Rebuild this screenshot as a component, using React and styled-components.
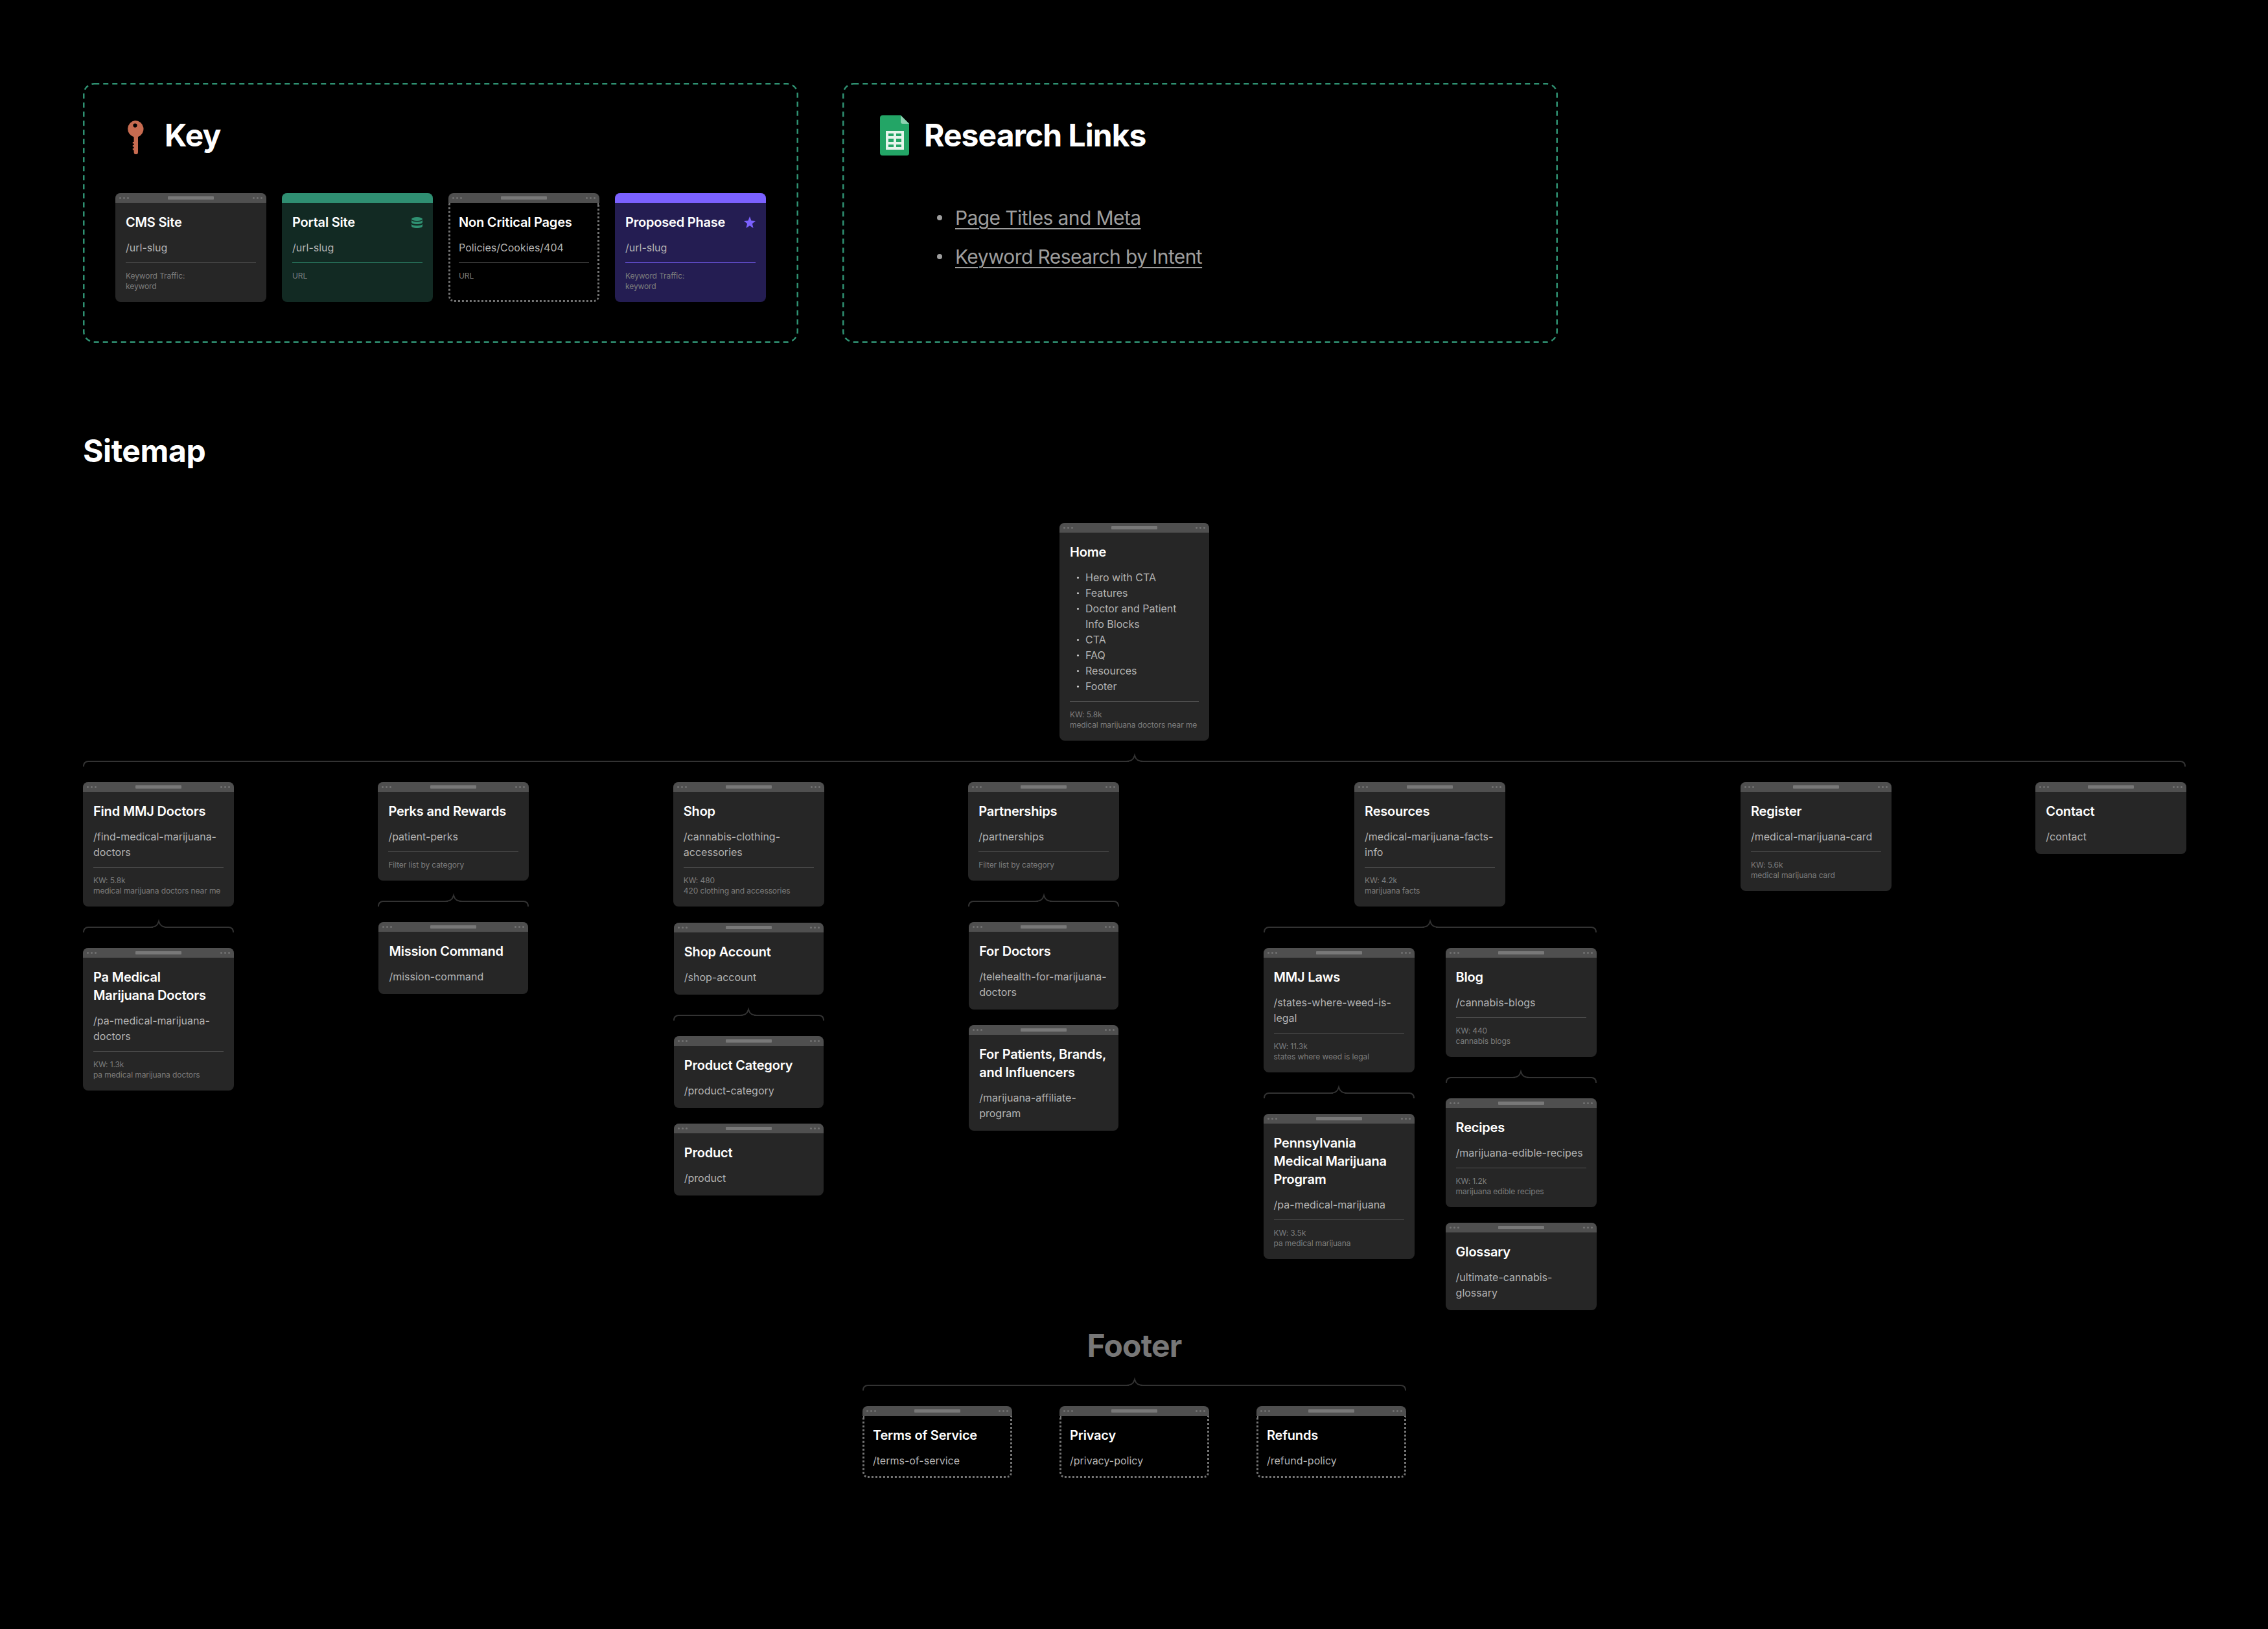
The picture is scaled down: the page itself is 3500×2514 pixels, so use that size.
import React from 'react';
import styled, { createGlobalStyle, css } from 'styled-components';

const GlobalStyle = createGlobalStyle`
  html, body {
    margin: 0;
    background: #000;
  }
  * {
    box-sizing: border-box;
  }
`;

const Page = styled.div`
  width: 3500px;
  min-height: 2514px;
  padding: 128px 0 0 128px;
  background: #000;
  color: #fff;
  font-family: Inter, 'Liberation Sans', sans-serif;
`;

const TopRow = styled.div`
  display: flex;
  gap: 68px;
`;

const KeyBox = styled.section`
  position: relative;
  width: 1104px;
  height: 401px;
  padding: 48px;
`;

const DashFrame = styled.svg`
  position: absolute;
  inset: 0;
  width: 100%;
  height: 100%;
  fill: none;
  pointer-events: none;

  rect {
    x: 1.25px;
    y: 1.25px;
    width: calc(100% - 2.5px);
    height: calc(100% - 2.5px);
    rx: 16px;
    stroke: #2f9172;
    stroke-width: 2.5;
    stroke-dasharray: 8 6;
  }
`;

const BoxHead = styled.div`
  display: flex;
  align-items: center;
  gap: 14px;
  height: 64px;
`;

const IconSlot = styled.div`
  display: flex;
  align-items: center;
  justify-content: center;
  width: 64px;
  height: 64px;
  padding-top: ${({ $drop }) => $drop}px;
`;

const Heading = styled.h2`
  margin: 0;
  font-size: 48px;
  line-height: 64px;
  font-weight: 700;
  letter-spacing: -0.96px;
`;

const BoxHeading = styled(Heading)`
  padding-top: 2px;
`;

const KeyCards = styled.div`
  display: flex;
  gap: 24px;
  margin: 58px 0 0 2px;
`;

const Links = styled.ul`
  list-style: none;
  margin: 66px 0 0;
  padding: 0 0 0 98px;
`;

const LinkItem = styled.li`
  display: flex;
  align-items: center;
  gap: 20px;
  height: 60px;
  color: #9e9e9e;
  font-size: 30px;
  letter-spacing: -0.6px;

  &::before {
    content: '';
    width: 8px;
    height: 8px;
    border-radius: 50%;
    background: #9e9e9e;
  }

  a {
    color: inherit;
    text-decoration: underline;
    text-decoration-thickness: 2px;
    text-underline-offset: 5px;
  }
`;

const SitemapTitle = styled(Heading)`
  margin-top: 135px;
  letter-spacing: -0.4px;
`;

const Tree = styled.div`
  width: 3245px;
  margin-top: 79px;
`;

const Centered = styled.div`
  display: flex;
  justify-content: center;
`;

const Bracket = styled.div`
  position: relative;
  align-self: stretch;
  height: 9px;
  margin: 31px 0 24px;
  border: 2px solid #333;
  border-bottom: 0;
  border-radius: 8px 8px 0 0;

  svg {
    position: absolute;
    top: -10px;
    left: 50%;
    width: 26px;
    height: 10px;
    margin-left: -13px;
    overflow: visible;
  }
`;

const Columns = styled.div`
  display: flex;
  align-items: flex-start;
  gap: 222.4px;
`;

const Column = styled.div`
  display: flex;
  flex: none;
  flex-direction: column;
  align-items: ${({ $wide }) => ($wide ? 'center' : 'stretch')};
  width: ${({ $wide }) => ($wide ? '514px' : '233px')};
`;

const Stack = styled.div`
  display: flex;
  flex-direction: column;
  align-items: center;
  gap: ${({ $gap }) => $gap || 24}px;
  width: 100%;
`;

const Pair = styled.div`
  display: flex;
  align-items: flex-start;
  gap: 48px;
  width: 100%;
`;

const FooterTree = styled.div`
  display: flex;
  flex-direction: column;
  width: 839px;
  margin: -3px auto 0;
`;

const FooterTitle = styled.h2`
  margin: 23px 0 0;
  text-align: center;
  font-size: 48px;
  line-height: 64px;
  font-weight: 700;
  letter-spacing: -0.8px;
  color: #777;
`;

const FooterRow = styled.div`
  display: flex;
  justify-content: space-between;
`;

const themes = {
  cms: { bg: '#262626', bar: '#4f4f4f', line: '#525252' },
  portal: { bg: '#122a23', bar: '#2f8f72', line: '#2f8f72' },
  ghost: { bg: '#000', bar: '#4f4f4f', line: '#525252' },
  proposed: { bg: '#241d52', bar: '#7b61ff', line: '#7b61ff' },
};

const CardShell = styled.article`
  display: flex;
  flex-direction: column;
  flex: none;
  width: ${({ $narrow }) => ($narrow ? '231px' : '233px')};
  border-radius: 8px;
  overflow: hidden;
  background: ${({ $kind }) => themes[$kind].bg};
`;

const CardBar = styled.div`
  display: flex;
  align-items: center;
  justify-content: space-between;
  flex: none;
  height: 15px;
  padding: 0 6px;
  background: ${({ $kind }) => themes[$kind].bar};
`;

const Dots = styled.span`
  display: flex;
  gap: 3px;

  i {
    width: 3px;
    height: 3px;
    border-radius: 50%;
    background: #737373;
  }
`;

const BarPill = styled.span`
  width: 71px;
  height: 5px;
  border-radius: 1px;
  background: #787878;
`;

const CardBody = styled.div`
  flex: 1;
  padding: 16px 16px 15px;
  ${({ $kind }) =>
    $kind === 'ghost' &&
    css`
      padding: 16px 13px 12px;
      border: 3px dotted #747474;
      border-top: 0;
      border-radius: 0 0 8px 8px;
    `}
`;

const TitleRow = styled.div`
  display: flex;
  align-items: center;
  justify-content: space-between;
`;

const CardTitle = styled.h3`
  margin: 0;
  font-size: 20px;
  line-height: 28px;
  font-weight: 600;
  letter-spacing: -0.2px;
  color: #fff;
`;

const Slug = styled.div`
  margin-top: 13px;
  font-size: 16px;
  line-height: 24px;
  color: #b3b3b3;
`;

const Bullets = styled.ul`
  list-style: none;
  margin: 13px 0 0;
  padding: 0 16px 0 24px;
  font-size: 16px;
  line-height: 24px;
  color: #b3b3b3;
`;

const Bullet = styled.li`
  position: relative;

  &::before {
    content: '';
    position: absolute;
    top: 11px;
    left: -13px;
    width: 3px;
    height: 3px;
    border-radius: 50%;
    background: #d0d0d0;
  }
`;

const Meta = styled.div`
  margin-top: 11px;
  padding-top: 12px;
  padding-bottom: 1px;
  border-top: 1px solid ${({ $kind }) => themes[$kind].line};
  font-size: 12px;
  line-height: 16px;
  letter-spacing: -0.1px;
  color: #7d7d7d;
`;

const KeyIcon = () => (
  <svg width="27" height="52" viewBox="0 0 27 52">
    <path
      fill="#c76b50"
      fillRule="evenodd"
      d="M13.5 0a13 13 0 0 1 4.500 25.200V49a3.200 3.200 0 0 1-6.400 0v-3.500H9.800v-2.600h1.800v-2.400H9.800v-2.600h1.800v-2.300H9.800V33h1.800v-7.600A13 13 0 0 1 13.500 0zm0 4.500a3.100 3.100 0 1 0 0 6.200 3.100 3.100 0 0 0 0-6.200z"
    />
  </svg>
);

const SheetsIcon = () => (
  <svg width="45" height="62" viewBox="0 0 45 62">
    <path fill="#23a566" d="M4 0h28l13 13v45a4 4 0 0 1-4 4H4a4 4 0 0 1-4-4V4a4 4 0 0 1 4-4z" />
    <path fill="#8ed1b1" d="M32 0l13 13H35a3 3 0 0 1-3-3z" />
    <path
      fill="#e6f4ec"
      fillRule="evenodd"
      d="M9 24h28v29H9zM13 28v4h8v-4zM25 28v4h8v-4zM13 36v5h8v-5zM25 36v5h8v-5zM13 45v4h8v-4zM25 45v4h8v-4z"
    />
  </svg>
);

const DatabaseIcon = () => (
  <svg width="17" height="17" viewBox="0 0 17 17" fill="#2f9172">
    <ellipse cx="8.5" cy="3" rx="8.5" ry="3" />
    <path d="M0 5c1.400 1.500 4.500 2.200 8.500 2.200S15.600 6.500 17 5v3c0 1.600-3.800 3-8.500 3S0 9.600 0 8z" />
    <path d="M0 11c1.400 1.500 4.500 2.200 8.500 2.200s7.100-.7 8.500-2.200v3c0 1.600-3.800 3-8.500 3S0 15.600 0 14z" />
  </svg>
);

const StarIcon = () => (
  <svg width="18" height="18" viewBox="0 0 18 18" fill="#7b61ff">
    <path d="M9 0l2.400 6.500L18 6.900l-5.100 4.300 1.700 6.800L9 14.200 3.400 18l1.700-6.800L0 6.900l6.600-.4z" />
  </svg>
);

const Peak = () => (
  <svg viewBox="0 0 26 10">
    <rect x="4" y="7" width="18" height="3" fill="#000" />
    <path d="M0 9c7 0 11-2 13-9 2 7 6 9 13 9" fill="none" stroke="#333" strokeWidth="2" />
  </svg>
);

const Branch = () => (
  <Bracket>
    <Peak />
  </Bracket>
);

const Card = ({ title, slug, items, meta, kind = 'cms', narrow, icon }) => (
  <CardShell $kind={kind} $narrow={narrow}>
    <CardBar $kind={kind}>
      {(kind === 'cms' || kind === 'ghost') && (
        <>
          <Dots>
            <i />
            <i />
            <i />
          </Dots>
          <BarPill />
          <Dots>
            <i />
            <i />
            <i />
          </Dots>
        </>
      )}
    </CardBar>
    <CardBody $kind={kind}>
      <TitleRow>
        <CardTitle>{title}</CardTitle>
        {icon}
      </TitleRow>
      {slug && <Slug>{slug}</Slug>}
      {items && (
        <Bullets>
          {items.map(item => (
            <Bullet key={item}>{item}</Bullet>
          ))}
        </Bullets>
      )}
      {meta && (
        <Meta $kind={kind}>
          {meta.map(line => (
            <div key={line}>{line}</div>
          ))}
        </Meta>
      )}
    </CardBody>
  </CardShell>
);

const homeItems = [
  'Hero with CTA',
  'Features',
  'Doctor and Patient Info Blocks',
  'CTA',
  'FAQ',
  'Resources',
  'Footer',
];

export default function App() {
  return (
    <Page>
      <GlobalStyle />
      <TopRow>
        <KeyBox>
          <DashFrame>
            <rect />
          </DashFrame>
          <BoxHead>
            <IconSlot $drop={8}>
              <KeyIcon />
            </IconSlot>
            <BoxHeading>Key</BoxHeading>
          </BoxHead>
          <KeyCards>
            <Card title="CMS Site" slug="/url-slug" meta={['Keyword Traffic:', 'keyword']} />
            <Card title="Portal Site" slug="/url-slug" meta={['URL']} kind="portal" icon={<DatabaseIcon />} />
            <Card title="Non Critical Pages" slug="Policies/Cookies/404" meta={['URL']} kind="ghost" />
            <Card
              title="Proposed Phase"
              slug="/url-slug"
              meta={['Keyword Traffic:', 'keyword']}
              kind="proposed"
              icon={<StarIcon />}
            />
          </KeyCards>
        </KeyBox>
        <KeyBox>
          <DashFrame>
            <rect />
          </DashFrame>
          <BoxHead>
            <IconSlot $drop={2}>
              <SheetsIcon />
            </IconSlot>
            <BoxHeading>Research Links</BoxHeading>
          </BoxHead>
          <Links>
            <LinkItem>
              <a href="#titles">Page Titles and Meta</a>
            </LinkItem>
            <LinkItem>
              <a href="#keywords">Keyword Research by Intent</a>
            </LinkItem>
          </Links>
        </KeyBox>
      </TopRow>

      <SitemapTitle>Sitemap</SitemapTitle>

      <Tree>
        <Centered>
          <Card
            title="Home"
            items={homeItems}
            meta={['KW: 5.8k', 'medical marijuana doctors near me']}
            narrow
          />
        </Centered>
        <Branch />
        <Columns>
          <Column>
            <Card
              title="Find MMJ Doctors"
              slug="/find-medical-marijuana-doctors"
              meta={['KW: 5.8k', 'medical marijuana doctors near me']}
            />
            <Branch />
            <Card
              title="Pa Medical Marijuana Doctors"
              slug="/pa-medical-marijuana-doctors"
              meta={['KW: 1.3k', 'pa medical marijuana doctors']}
            />
          </Column>
          <Column>
            <Card title="Perks and Rewards" slug="/patient-perks" meta={['Filter list by category']} />
            <Branch />
            <Stack>
              <Card title="Mission Command" slug="/mission-command" narrow />
            </Stack>
          </Column>
          <Column>
            <Stack $gap={25}>
              <Card
                title="Shop"
                slug="/cannabis-clothing-accessories"
                meta={['KW: 480', '420 clothing and accessories']}
              />
              <Card title="Shop Account" slug="/shop-account" narrow />
            </Stack>
            <Branch />
            <Stack>
              <Card title="Product Category" slug="/product-category" narrow />
              <Card title="Product" slug="/product" narrow />
            </Stack>
          </Column>
          <Column>
            <Card title="Partnerships" slug="/partnerships" meta={['Filter list by category']} />
            <Branch />
            <Stack>
              <Card title="For Doctors" slug="/telehealth-for-marijuana-doctors" narrow />
              <Card title="For Patients, Brands, and Influencers" slug="/marijuana-affiliate-program" narrow />
            </Stack>
          </Column>
          <Column $wide>
            <Card
              title="Resources"
              slug="/medical-marijuana-facts-info"
              meta={['KW: 4.2k', 'marijuana facts']}
            />
            <Branch />
            <Pair>
              <Column>
                <Card
                  title="MMJ Laws"
                  slug="/states-where-weed-is-legal"
                  meta={['KW: 11.3k', 'states where weed is legal']}
                />
                <Branch />
                <Card
                  title="Pennsylvania Medical Marijuana Program"
                  slug="/pa-medical-marijuana"
                  meta={['KW: 3.5k', 'pa medical marijuana']}
                />
              </Column>
              <Column>
                <Card title="Blog" slug="/cannabis-blogs" meta={['KW: 440', 'cannabis blogs']} />
                <Branch />
                <Stack>
                  <Card
                    title="Recipes"
                    slug="/marijuana-edible-recipes"
                    meta={['KW: 1.2k', 'marijuana edible recipes']}
                  />
                  <Card title="Glossary" slug="/ultimate-cannabis-glossary" />
                </Stack>
              </Column>
            </Pair>
          </Column>
          <Column>
            <Card
              title="Register"
              slug="/medical-marijuana-card"
              meta={['KW: 5.6k', 'medical marijuana card']}
            />
          </Column>
          <Column>
            <Card title="Contact" slug="/contact" />
          </Column>
        </Columns>

        <FooterTitle>Footer</FooterTitle>
        <FooterTree>
          <Branch />
          <FooterRow>
            <Card title="Terms of Service" slug="/terms-of-service" kind="ghost" narrow />
            <Card title="Privacy" slug="/privacy-policy" kind="ghost" narrow />
            <Card title="Refunds" slug="/refund-policy" kind="ghost" narrow />
          </FooterRow>
        </FooterTree>
      </Tree>
    </Page>
  );
}
